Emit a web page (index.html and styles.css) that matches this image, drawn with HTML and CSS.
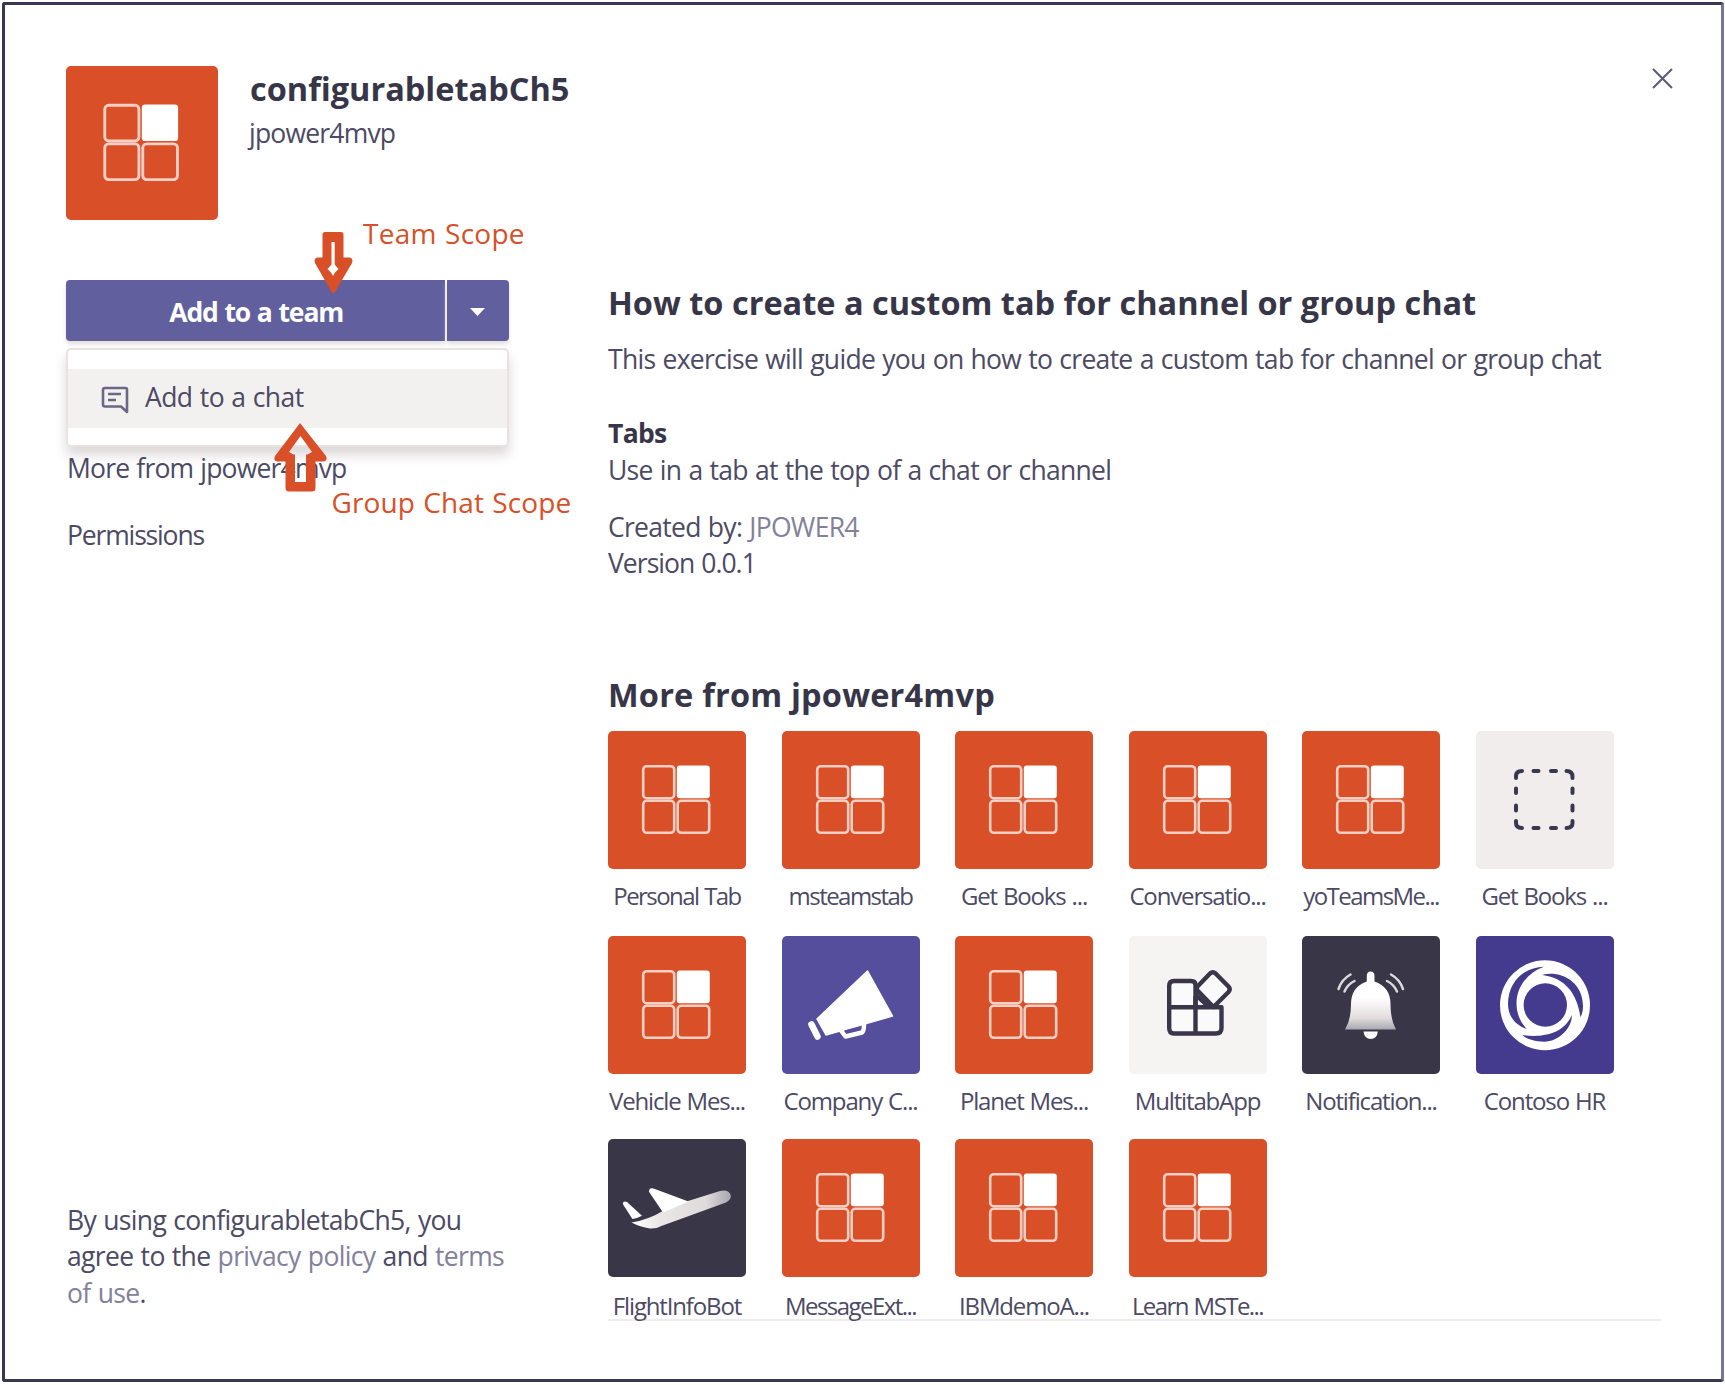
FILE: index.html
```html
<!DOCTYPE html>
<html lang="en">
<head>
<meta charset="utf-8">
<title>configurabletabCh5</title>
<link rel="stylesheet" href="styles.css">
</head>
<body>
<svg class="defs" aria-hidden="true">
  <defs>
    <symbol id="blocks" viewBox="0 0 138 138" preserveAspectRatio="none">
      <g fill="none" stroke="#f7cfc4" stroke-width="2.600">
        <rect x="35.200" y="35.200" width="31" height="32" rx="3.500"/>
        <rect x="35.200" y="69.800" width="31" height="32" rx="3.500"/>
        <rect x="69.700" y="69.800" width="31.500" height="32" rx="3.500"/>
      </g>
      <rect x="68.800" y="34.500" width="33" height="32.800" rx="3" fill="#fff"/>
    </symbol>
    <linearGradient id="bellFill" x1="0" y1="0" x2="0" y2="1">
      <stop offset="0.45" stop-color="#fff"/><stop offset="0.8" stop-color="#e2dedd"/><stop offset="1" stop-color="#a9a7b2"/>
    </linearGradient>
    <linearGradient id="planeFill" x1="0" y1="0" x2="1" y2="0">
      <stop offset="0" stop-color="#fff"/><stop offset="0.3" stop-color="#e9e6e5"/><stop offset="0.75" stop-color="#dedbdb"/><stop offset="1" stop-color="#a8a6b0"/>
    </linearGradient>
  </defs>
</svg>
<main class="dialog">
  <header class="head">
    <svg class="logo"><use href="#blocks"/></svg>
    <div class="head-text">
      <h1>configurabletabCh5</h1>
      <p class="publisher">jpower4mvp</p>
    </div>
    <svg class="close" viewBox="0 0 20 20"><path d="M1 1 19 19M19 1 1 19"/></svg>
  </header>
  <div class="body">
    <aside class="side">
      <div class="split">
        <div class="split-main">Add to a team</div>
        <div class="split-caret"><svg viewBox="0 0 15 8"><path d="M0 0H15L7.5 8Z"/></svg></div>
        <div class="menu">
          <div class="menu-item">
            <svg viewBox="0 0 28 28"><path d="M4 2H24.5Q26 2 26 3.500V26L20 20.500H4Q2 20.500 2 18.500V4Q2 2 4 2ZM7 8H20M7 14H15"/></svg>
            <span>Add to a chat</span>
          </div>
        </div>
      </div>
      <nav class="links">
        <span>More from jpower4mvp</span>
        <span class="narrow">Permissions</span>
      </nav>
      <p class="legal">By using configurabletabCh5, you<br>agree to the <a>privacy policy</a> and <a>terms<br>of use</a>.</p>
      <span class="note note-team">Team Scope</span>
      <span class="note note-chat">Group Chat Scope</span>
      <svg class="arrow arrow-team" viewBox="0 0 40 62"><path d="M11 0H27Q29.500 0 29.500 3V25.500H36Q39.500 27 38 31L21 60Q19 62 17.500 60L1 31Q-.5 27 3 25.500H8.500V3Q8.500 0 11 0Z"/><path class="slit" d="M17.500 10V32.500L13.500 37L17 40.500L19 44L21 40.500L24.500 37L20.700 32.500V10Z"/></svg>
      <svg class="arrow arrow-chat" viewBox="0 0 53 69"><path fill-rule="evenodd" d="M26 0 52 33Q54 38 50 38.500H41.500V65Q41.500 68.500 38 68.500H15Q11.500 68.500 11.500 65V38.500H3Q-1 38 1 33ZM26.500 13 15 29 19.500 31.500H21V59H32V31.500H33.500L38 29Z"/></svg>
    </aside>
    <section class="main">
      <h2>How to create a custom tab for channel or group chat</h2>
      <p class="intro">This exercise will guide you on how to create a custom tab for channel or group chat</p>
      <h3>Tabs</h3>
      <p>Use in a tab at the top of a chat or channel</p>
      <p class="created">Created by: <a>JPOWER4</a></p>
      <p class="version">Version 0.0.1</p>
      <h2 class="more">More from jpower4mvp</h2>
      <div class="apps">
        <div class="app"><svg class="tile orange"><use href="#blocks"/></svg><span class="tight">Personal Tab</span></div>
        <div class="app"><svg class="tile orange"><use href="#blocks"/></svg><span class="tight">msteamstab</span></div>
        <div class="app"><svg class="tile orange"><use href="#blocks"/></svg><span>Get Books ...</span></div>
        <div class="app"><svg class="tile orange"><use href="#blocks"/></svg><span>Conversatio...</span></div>
        <div class="app"><svg class="tile orange"><use href="#blocks"/></svg><span class="tight">yoTeamsMe...</span></div>
        <div class="app"><svg class="tile grey" viewBox="0 0 138 138">
          <g fill="none" stroke="#3a3850" stroke-width="4" stroke-linecap="round">
            <path d="M40 47V45Q40 40 46 40M90.500 40Q96.500 40 96.500 46V47M96.500 90V92Q96.500 97 90.500 97M46 97Q40 97 40 92V90"/>
            <path d="M57.500 40H62.500M75 40H80M57.500 97H62.500M75 97H80M40 57.500V62M40 74.500V79.500M96.500 57.500V62M96.500 74.500V79.500"/>
          </g></svg><span>Get Books ...</span></div>

        <div class="app"><svg class="tile orange"><use href="#blocks"/></svg><span>Vehicle Mes...</span></div>
        <div class="app"><svg class="tile violet" viewBox="0 0 138 138">
          <path d="M85.500 35 110.500 80 58 95 44 99 35 83Z" fill="#fff" stroke="#fff" stroke-width="1.500" stroke-linejoin="round"/>
          <path d="M29.500 88.500 35.500 100.500" stroke="#fff" stroke-width="6.500" stroke-linecap="round"/>
          <path d="M59 94.500 63.500 100.500 80 96.500Q82 95 82 88" fill="none" stroke="#fff" stroke-width="4.500" stroke-linejoin="round"/>
          <path d="M62.500 94.500 79 90.500 78 93 65 96.500Z" fill="#554e9c"/></svg><span>Company C...</span></div>
        <div class="app"><svg class="tile orange"><use href="#blocks"/></svg><span>Planet Mes...</span></div>
        <div class="app"><svg class="tile pale" viewBox="0 0 138 138">
          <g fill="#fbfafa" stroke="#383648" stroke-width="4.400" stroke-linejoin="round">
            <path d="M45 45H62Q66.500 45 66.500 49V71.200H92.500V92Q92.500 97.500 87 97.500H45Q40.200 97.500 40.200 92V50Q40.200 45 45 45Z"/>
            <path d="M40 71.200H68M66.500 60V97.500M67 59 80 71.200" fill="none"/>
            <path d="M81 37.500Q83.800 35 86.600 37.500L99.500 50.500Q102 53.300 99.500 56L84.500 71 68.500 54.500Q67 52.500 68.500 50.500Z"/>
          </g></svg><span>MultitabApp</span></div>
        <div class="app"><svg class="tile dark" viewBox="0 0 138 138">
          <path d="M68.500 35.500Q72.500 35.500 72.500 40V45.500Q88.500 51 88.500 68Q88.500 84 94 93.500H43Q49 84 49 68Q49 51 64.800 45.500V40Q64.800 35.500 68.500 35.500Z" fill="url(#bellFill)"/>
          <path d="M61.500 95.500H75.800Q75 103 68.700 103Q62.500 103 61.500 95.500Z" fill="#fff"/>
          <path d="M48.500 38.500Q39.500 43.500 36.500 53M52.500 45Q45.500 48.500 42.500 55.500M89 38.500Q98 43.500 101 53M85 45Q92 48.500 95 55.500" fill="none" stroke="#dcd9dc" stroke-width="2.500" stroke-linecap="round"/></svg><span>Notification...</span></div>
        <div class="app"><svg class="tile indigo" viewBox="0 0 138 138">
          <circle cx="69" cy="69.200" r="45" fill="#fff"/>
          <g class="cut">
            <circle cx="69.300" cy="69" r="21.700"/>
            <path d="M68 30.700C48 31 32 46 32 68C32 80 39 89 50.800 93C44 86 40.500 77 40.500 67C40.500 50 53 36 68 30.700Z"/>
            <path d="M66 39C82 34 107 44 107 70Q107 77 104.500 81C101 58 90 42 66 39Z"/>
            <path d="M95.800 79C96.500 92 82 106 68 105.700C58 105 50 103 46.500 99C66 102 88 98 95.800 79Z"/>
          </g></svg><span>Contoso HR</span></div>

        <div class="app last"><svg class="tile dark" viewBox="0 0 138 138">
          <path d="M23.500 83.500Q40 81 55.700 71.500L80 62 112 52Q120 50 122.500 55.500Q124 60 118 63.500L53.400 87Q48 90 42 89.500Q32 88 23.500 83.500Z" fill="url(#planeFill)"/>
          <path d="M41 52.700Q41 48 45.500 49.500L80.500 62.500 55 73.500Z" fill="#fff"/>
          <path d="M14.800 65Q15 61.500 19 63L34 76.700Q29 79.500 24.400 80Z" fill="#fff"/></svg><span>FlightInfoBot</span></div>
        <div class="app last"><svg class="tile orange"><use href="#blocks"/></svg><span class="tight">MessageExt...</span></div>
        <div class="app last"><svg class="tile orange"><use href="#blocks"/></svg><span>IBMdemoA...</span></div>
        <div class="app last"><svg class="tile orange"><use href="#blocks"/></svg><span class="tight">Learn MSTe...</span></div>
      </div>
    </section>
  </div>
</main>
</body>
</html>
```
FILE: styles.css
```css
* { box-sizing: border-box; }
body {
  margin: 0;
  width: 1725px;
  height: 1385px;
  padding: 2px 1px 3px 2px;
  background: #fff;
  color: #4c4a64;
  font: 400 26.5px/36.5px "Open Sans", "Noto Sans", sans-serif;
  letter-spacing: -0.7px;
  word-spacing: 0.9px;
}
.defs { display: block; width: 0; height: 0; position: absolute; }
h1, h2, h3, p { margin: 0; }
h1, h2, h3 { color: #373548; font-weight: 700; }
h1, h2 { font-size: 32.5px; line-height: 40px; letter-spacing: 0; word-spacing: 0; }
h3 { font-size: 26.5px; line-height: 37px; }
a { color: #83819a; }

.dialog {
  width: 1722px;
  height: 1380px;
  padding: 61px 48px 0 61px;
  border: 3px solid #3a3850;
  border-right-color: #76749a;
  border-radius: 3px;
}
.head { display: flex; height: 214px; }
.logo { width: 152px; height: 154px; background: #d94f27; border-radius: 5px; }
.head-text { flex: 1; padding: 3px 0 0 32px; }
.publisher { line-height: 36px; margin: 6px 0 0 -1px; letter-spacing: -0.8px; }
.close { width: 21px; height: 21px; margin: 2px 0 0; fill: none; stroke: #5d5b7a; stroke-width: 2; }

.body { display: grid; grid-template-columns: 443px 1fr; column-gap: 99px; height: 1041px; }
.side { position: relative; display: flex; flex-direction: column; }
.split { position: relative; display: flex; gap: 2.5px; height: 61px; color: #fff; }
.split-main {
  width: 378.5px;
  padding: 14px 0 0 2px;
  text-align: center;
  font-weight: 700;
  letter-spacing: -1.1px;
}
.split-main, .split-caret { background: #615f9d; box-shadow: 0 3px 4px #e2dcdb; }
.split-main { border-radius: 4px 0 0 4px; }
.split-caret { flex: 1; display: grid; place-items: center; border-radius: 0 4px 4px 0; }
.split-caret svg { width: 15px; height: 8px; margin: 2px 2px 0 0; fill: #fff; }
.menu {
  position: absolute;
  left: 0;
  top: 68px;
  width: 443px;
  height: 99px;
  padding: 19px 0;
  background: #fff;
  border: 2px solid #e8e3e2;
  border-radius: 5px;
  box-shadow: 0 8px 12px rgba(80, 60, 60, .2);
}
.menu-item {
  display: flex;
  align-items: center;
  gap: 16px;
  height: 59px;
  padding-left: 33px;
  background: #f3f1f0;
  color: #4c4a64;
  letter-spacing: -0.55px;
}
.menu-item svg { width: 28px; height: 28px; margin-top: 3px; fill: none; stroke: #6a6886; stroke-width: 2.6; stroke-linejoin: round; }
.menu-item span { margin-top: -3px; }
.links { display: flex; flex-direction: column; gap: 31px; margin: 108.5px 0 0 1px; letter-spacing: -0.8px; }
.narrow { letter-spacing: -1.15px; }
.legal { margin: 648px -20px 0 1px; line-height: 36.7px; white-space: nowrap; letter-spacing: -0.65px; }

.note { position: absolute; color: #d94f27; font-size: 28px; line-height: 36px; letter-spacing: .25px; white-space: nowrap; }
.note-team { left: 297px; top: -65px; }
.note-chat { left: 265.5px; top: 204px; letter-spacing: .1px; }
.arrow { position: absolute; fill: #d94f27; }
.arrow .slit { fill: #fff; }
.arrow-team { left: 248px; top: -48px; width: 40px; height: 62px; }
.arrow-chat { left: 208px; top: 143px; width: 53px; height: 69px; }

.main { height: 1041px; margin-right: 12px; padding-top: 3px; border-bottom: 2px solid #efeceb; white-space: nowrap; }
.intro { margin-top: 17.5px; }
.main h3 { margin: 38px 0 0; }
.created { margin-top: 20px; }
.version { letter-spacing: -0.95px; }
.more { margin-top: 93.5px; letter-spacing: .2px; }
.apps {
  display: grid;
  grid-template-columns: repeat(6, 138px);
  grid-template-rows: 205px 203.5px auto;
  column-gap: 35.5px;
  margin-top: 15.5px;
}
.app { display: flex; flex-direction: column; align-items: center; }
.app span { margin-top: 10px; font-size: 24px; line-height: 34px; letter-spacing: -1.15px; }
.app .tight { letter-spacing: -1.55px; }
.app.last span { margin-top: 12px; }
.tile { flex: none; width: 138px; height: 138px; border-radius: 5px; }
.orange { background: #d94f27; }
.grey { background: #f0edec; }
.pale { background: #f6f4f3; }
.violet { background: #554e9c; }
.dark { background: #393747; }
.indigo { background: #443a8e; }
.cut { fill: #443a8e; }
```
